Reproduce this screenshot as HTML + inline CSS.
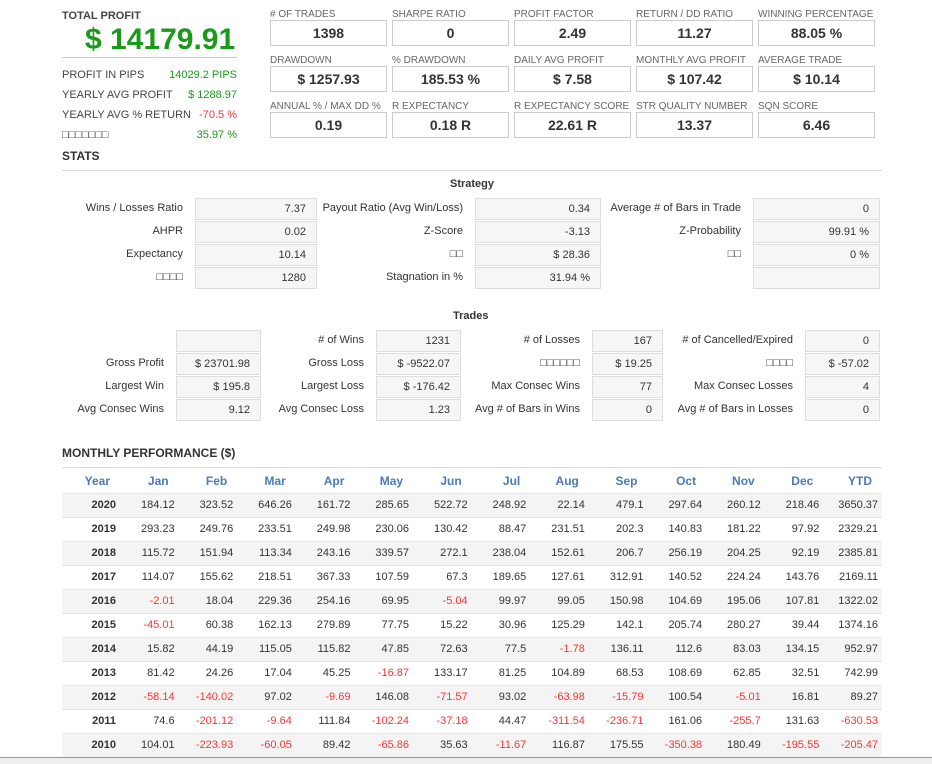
<!DOCTYPE html>
<html><head><meta charset="utf-8"><style>
*{margin:0;padding:0;box-sizing:border-box}
body{width:932px;height:764px;background:#fff;font-family:"Liberation Sans",Arial,sans-serif;color:#333;position:relative;overflow:hidden}
.a{position:absolute;white-space:nowrap}
.lbl{font-size:10px;color:#666}
.box{position:absolute;width:117px;height:26px;border:1px solid #ccc;text-align:center;font-weight:bold;font-size:14px;line-height:24px;color:#333}
.g{color:#1a9a1a}.r{color:#f33}
.sl{position:absolute;font-size:11px;color:#333;text-align:right;line-height:21px}
.sb{position:absolute;height:22px;border:1px solid #ddd;background:#f6f6f6;font-size:11px;text-align:right;padding-right:10px;line-height:20px;color:#333}
table{position:absolute;left:62px;top:469px;width:820px;border-collapse:collapse;table-layout:fixed;font-size:11px}
th{color:#4a7ab8;font-weight:bold;font-size:12px;text-align:right;padding-right:10px;height:24px}
td{text-align:right;padding-right:4px;height:24px;border-top:1px solid #e6e6e6}
td:first-child{font-weight:bold;padding-right:4px}
tr:nth-child(even) td{background:#f4f4f4}
td.r{color:#f33}
</style></head><body>
<div class="a" style="left:62px;top:10px;font-size:11px;font-weight:bold;color:#444">TOTAL PROFIT</div>
<div class="a g" style="left:85px;top:23px;font-size:30px;font-weight:bold;color:#1a9a1a">$ 14179.91</div>
<div class="a" style="left:62px;top:57px;width:175px;border-top:1px solid #ccc"></div>
<div class="a" style="left:62px;top:65px;width:175px;font-size:11px;color:#444;line-height:20px">
<div>PROFIT IN PIPS<span class="g" style="float:right">14029.2 PIPS</span></div>
<div>YEARLY AVG PROFIT<span class="g" style="float:right">$ 1288.97</span></div>
<div>YEARLY AVG % RETURN<span class="r" style="float:right">-70.5 %</span></div>
<div>□□□□□□□<span class="g" style="float:right">35.97 %</span></div>
</div>

<div class="a lbl" style="left:270px;top:9px"># OF TRADES</div><div class="box" style="left:270px;top:20px">1398</div>
<div class="a lbl" style="left:392px;top:9px">SHARPE RATIO</div><div class="box" style="left:392px;top:20px">0</div>
<div class="a lbl" style="left:514px;top:9px">PROFIT FACTOR</div><div class="box" style="left:514px;top:20px">2.49</div>
<div class="a lbl" style="left:636px;top:9px">RETURN / DD RATIO</div><div class="box" style="left:636px;top:20px">11.27</div>
<div class="a lbl" style="left:758px;top:9px">WINNING PERCENTAGE</div><div class="box" style="left:758px;top:20px">88.05 %</div>
<div class="a lbl" style="left:270px;top:55px">DRAWDOWN</div><div class="box" style="left:270px;top:66px">$ 1257.93</div>
<div class="a lbl" style="left:392px;top:55px">% DRAWDOWN</div><div class="box" style="left:392px;top:66px">185.53 %</div>
<div class="a lbl" style="left:514px;top:55px">DAILY AVG PROFIT</div><div class="box" style="left:514px;top:66px">$ 7.58</div>
<div class="a lbl" style="left:636px;top:55px">MONTHLY AVG PROFIT</div><div class="box" style="left:636px;top:66px">$ 107.42</div>
<div class="a lbl" style="left:758px;top:55px">AVERAGE TRADE</div><div class="box" style="left:758px;top:66px">$ 10.14</div>
<div class="a lbl" style="left:270px;top:101px">ANNUAL % / MAX DD %</div><div class="box" style="left:270px;top:112px">0.19</div>
<div class="a lbl" style="left:392px;top:101px">R EXPECTANCY</div><div class="box" style="left:392px;top:112px">0.18 R</div>
<div class="a lbl" style="left:514px;top:101px">R EXPECTANCY SCORE</div><div class="box" style="left:514px;top:112px">22.61 R</div>
<div class="a lbl" style="left:636px;top:101px">STR QUALITY NUMBER</div><div class="box" style="left:636px;top:112px">13.37</div>
<div class="a lbl" style="left:758px;top:101px">SQN SCORE</div><div class="box" style="left:758px;top:112px">6.46</div>

<div class="a" style="left:62px;top:149px;font-size:12px;font-weight:bold;color:#333">STATS</div>
<div class="a" style="left:62px;top:170px;width:820px;border-top:1px solid #ddd"></div>
<div class="a" style="left:450px;top:178px;font-size:11px;font-weight:bold">Strategy</div>

<div class="sl" style="right:749px;top:198px">Wins / Losses Ratio</div><div class="sb" style="left:195px;top:198px;width:122px">7.37</div>
<div class="sl" style="right:749px;top:221px">AHPR</div><div class="sb" style="left:195px;top:221px;width:122px">0.02</div>
<div class="sl" style="right:749px;top:244px">Expectancy</div><div class="sb" style="left:195px;top:244px;width:122px">10.14</div>
<div class="sl" style="right:749px;top:267px">□□□□</div><div class="sb" style="left:195px;top:267px;width:122px">1280</div>
<div class="sl" style="right:469px;top:198px">Payout Ratio (Avg Win/Loss)</div><div class="sb" style="left:475px;top:198px;width:126px">0.34</div>
<div class="sl" style="right:469px;top:221px">Z-Score</div><div class="sb" style="left:475px;top:221px;width:126px">-3.13</div>
<div class="sl" style="right:469px;top:244px">□□</div><div class="sb" style="left:475px;top:244px;width:126px">$ 28.36</div>
<div class="sl" style="right:469px;top:267px">Stagnation in %</div><div class="sb" style="left:475px;top:267px;width:126px">31.94 %</div>
<div class="sl" style="right:191px;top:198px">Average # of Bars in Trade</div><div class="sb" style="left:753px;top:198px;width:127px">0</div>
<div class="sl" style="right:191px;top:221px">Z-Probability</div><div class="sb" style="left:753px;top:221px;width:127px">99.91 %</div>
<div class="sl" style="right:191px;top:244px">□□</div><div class="sb" style="left:753px;top:244px;width:127px">0 %</div>
<div class="sb" style="left:753px;top:267px;width:127px"></div>

<div class="a" style="left:453px;top:310px;font-size:11px;font-weight:bold">Trades</div>
<div class="sb" style="left:176px;top:330px;width:85px"></div>
<div class="sl" style="right:768px;top:353px">Gross Profit</div><div class="sb" style="left:176px;top:353px;width:85px">$ 23701.98</div>
<div class="sl" style="right:768px;top:376px">Largest Win</div><div class="sb" style="left:176px;top:376px;width:85px">$ 195.8</div>
<div class="sl" style="right:768px;top:399px">Avg Consec Wins</div><div class="sb" style="left:176px;top:399px;width:85px">9.12</div>
<div class="sl" style="right:568px;top:330px"># of Wins</div><div class="sb" style="left:376px;top:330px;width:85px">1231</div>
<div class="sl" style="right:568px;top:353px">Gross Loss</div><div class="sb" style="left:376px;top:353px;width:85px">$ -9522.07</div>
<div class="sl" style="right:568px;top:376px">Largest Loss</div><div class="sb" style="left:376px;top:376px;width:85px">$ -176.42</div>
<div class="sl" style="right:568px;top:399px">Avg Consec Loss</div><div class="sb" style="left:376px;top:399px;width:85px">1.23</div>
<div class="sl" style="right:352px;top:330px"># of Losses</div><div class="sb" style="left:592px;top:330px;width:71px">167</div>
<div class="sl" style="right:352px;top:353px">□□□□□□</div><div class="sb" style="left:592px;top:353px;width:71px">$ 19.25</div>
<div class="sl" style="right:352px;top:376px">Max Consec Wins</div><div class="sb" style="left:592px;top:376px;width:71px">77</div>
<div class="sl" style="right:352px;top:399px">Avg # of Bars in Wins</div><div class="sb" style="left:592px;top:399px;width:71px">0</div>
<div class="sl" style="right:139px;top:330px"># of Cancelled/Expired</div><div class="sb" style="left:805px;top:330px;width:75px">0</div>
<div class="sl" style="right:139px;top:353px">□□□□</div><div class="sb" style="left:805px;top:353px;width:75px">$ -57.02</div>
<div class="sl" style="right:139px;top:376px">Max Consec Losses</div><div class="sb" style="left:805px;top:376px;width:75px">4</div>
<div class="sl" style="right:139px;top:399px">Avg # of Bars in Losses</div><div class="sb" style="left:805px;top:399px;width:75px">0</div>

<div class="a" style="left:62px;top:446px;font-size:12px;font-weight:bold;color:#333">MONTHLY PERFORMANCE ($)</div>
<div class="a" style="left:62px;top:467px;width:820px;border-top:1px solid #ddd"></div>
<table>
<colgroup><col style="width:58px"><col span="13"></colgroup>
<tr><th>Year</th><th>Jan</th><th>Feb</th><th>Mar</th><th>Apr</th><th>May</th><th>Jun</th><th>Jul</th><th>Aug</th><th>Sep</th><th>Oct</th><th>Nov</th><th>Dec</th><th>YTD</th></tr>
<tr><td>2020</td><td>184.12</td><td>323.52</td><td>646.26</td><td>161.72</td><td>285.65</td><td>522.72</td><td>248.92</td><td>22.14</td><td>479.1</td><td>297.64</td><td>260.12</td><td>218.46</td><td>3650.37</td></tr>
<tr><td>2019</td><td>293.23</td><td>249.76</td><td>233.51</td><td>249.98</td><td>230.06</td><td>130.42</td><td>88.47</td><td>231.51</td><td>202.3</td><td>140.83</td><td>181.22</td><td>97.92</td><td>2329.21</td></tr>
<tr><td>2018</td><td>115.72</td><td>151.94</td><td>113.34</td><td>243.16</td><td>339.57</td><td>272.1</td><td>238.04</td><td>152.61</td><td>206.7</td><td>256.19</td><td>204.25</td><td>92.19</td><td>2385.81</td></tr>
<tr><td>2017</td><td>114.07</td><td>155.62</td><td>218.51</td><td>367.33</td><td>107.59</td><td>67.3</td><td>189.65</td><td>127.61</td><td>312.91</td><td>140.52</td><td>224.24</td><td>143.76</td><td>2169.11</td></tr>
<tr><td>2016</td><td class="r">-2.01</td><td>18.04</td><td>229.36</td><td>254.16</td><td>69.95</td><td class="r">-5.04</td><td>99.97</td><td>99.05</td><td>150.98</td><td>104.69</td><td>195.06</td><td>107.81</td><td>1322.02</td></tr>
<tr><td>2015</td><td class="r">-45.01</td><td>60.38</td><td>162.13</td><td>279.89</td><td>77.75</td><td>15.22</td><td>30.96</td><td>125.29</td><td>142.1</td><td>205.74</td><td>280.27</td><td>39.44</td><td>1374.16</td></tr>
<tr><td>2014</td><td>15.82</td><td>44.19</td><td>115.05</td><td>115.82</td><td>47.85</td><td>72.63</td><td>77.5</td><td class="r">-1.78</td><td>136.11</td><td>112.6</td><td>83.03</td><td>134.15</td><td>952.97</td></tr>
<tr><td>2013</td><td>81.42</td><td>24.26</td><td>17.04</td><td>45.25</td><td class="r">-16.87</td><td>133.17</td><td>81.25</td><td>104.89</td><td>68.53</td><td>108.69</td><td>62.85</td><td>32.51</td><td>742.99</td></tr>
<tr><td>2012</td><td class="r">-58.14</td><td class="r">-140.02</td><td>97.02</td><td class="r">-9.69</td><td>146.08</td><td class="r">-71.57</td><td>93.02</td><td class="r">-63.98</td><td class="r">-15.79</td><td>100.54</td><td class="r">-5.01</td><td>16.81</td><td>89.27</td></tr>
<tr><td>2011</td><td>74.6</td><td class="r">-201.12</td><td class="r">-9.64</td><td>111.84</td><td class="r">-102.24</td><td class="r">-37.18</td><td>44.47</td><td class="r">-311.54</td><td class="r">-236.71</td><td>161.06</td><td class="r">-255.7</td><td>131.63</td><td class="r">-630.53</td></tr>
<tr><td>2010</td><td>104.01</td><td class="r">-223.93</td><td class="r">-60.05</td><td>89.42</td><td class="r">-65.86</td><td>35.63</td><td class="r">-11.67</td><td>116.87</td><td>175.55</td><td class="r">-350.38</td><td>180.49</td><td class="r">-195.55</td><td class="r">-205.47</td></tr>
</table>
<div class="a" style="left:0;top:757px;width:932px;height:7px;background:#eee;border-top:1px solid #999"></div>
</body></html>
